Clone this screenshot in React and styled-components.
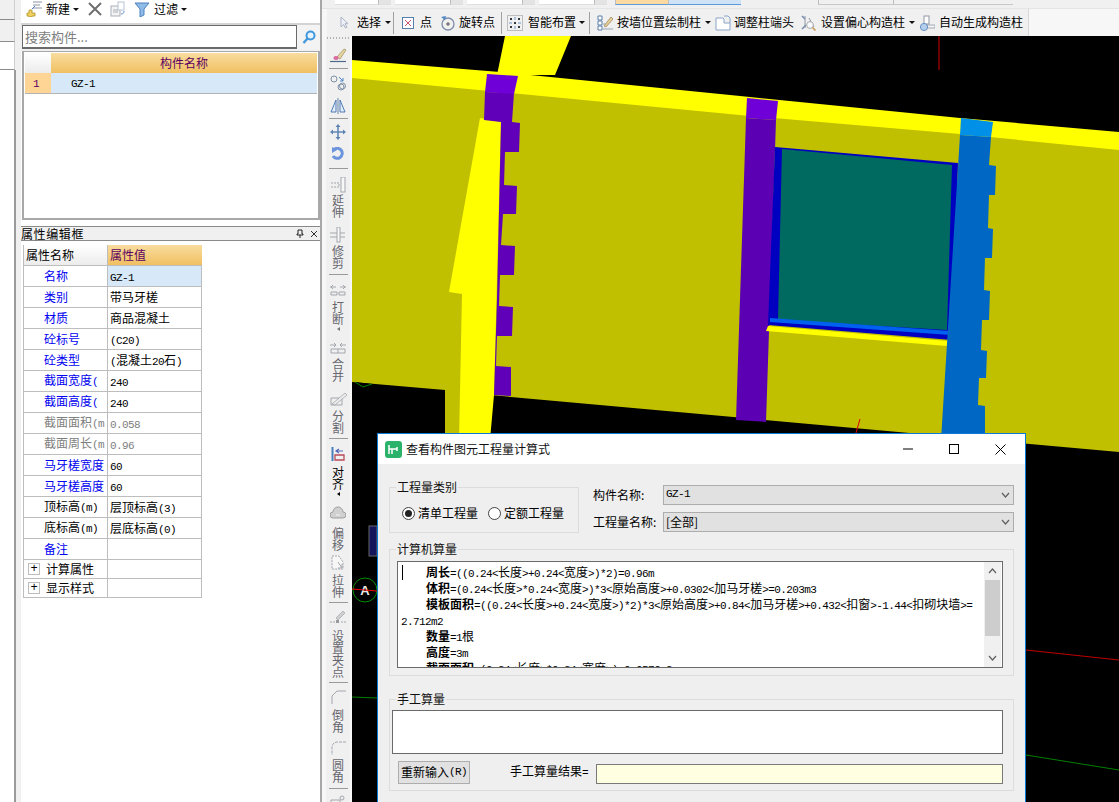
import React from "react";
import styled, { createGlobalStyle } from "styled-components";

const Global = createGlobalStyle`
  html, body { margin: 0; padding: 0; width: 1119px; height: 802px; overflow: hidden; background: #f0f0f0; }
  body { font: 12px/1.2 "Noto Sans CJK SC", "Liberation Sans", sans-serif; color: #000; }
  * { box-sizing: border-box; }
  fieldset { min-width: 0; }
`;

const Page = styled.div`
  position: relative; display: flex; width: 1119px; height: 802px; overflow: hidden; background: #f0f0f0;
`;

/* ---- mixed CJK / half-width text ---- */
const Latin = styled.span`
  font-family: "Liberation Mono", "DejaVu Sans Mono", monospace; font-size: 11px; letter-spacing: -0.6px;
`;
const Mixed = ({ text }) =>
  text.split(/([\x20-\x7e]+)/).filter(Boolean).map((p, i) =>
    /^[\x20-\x7e]/.test(p) ? <Latin key={i}>{p}</Latin> : <React.Fragment key={i}>{p}</React.Fragment>
  );

/* ---- left rail ---- */
const Rail = styled.div`
  width: 21px; flex: none; display: flex; flex-direction: column; background: #f0f0f0;
`;
const RailTab = styled.div`
  width: 15px; height: ${(p) => p.$h}px; flex: none; background: ${(p) => p.$bg};
  border-bottom: 1px solid #8c8c8c; border-right: 1px solid #cfcfcf;
`;
const RailRest = styled.div`
  width: 16px; flex: 1; background: #fff; border-right: 2px solid #9a9a9a;
`;

/* ---- component panel ---- */
const Panel = styled.div`
  width: 301px; flex: none; display: flex; flex-direction: column; background: #fff; border-right: 2px solid #a8a8a8;
`;
const PanelBar = styled.div`
  height: 25px; display: flex; align-items: center; padding: 0 0 5px 5px; background: #fff; border-bottom: 2px solid #d4d4d4; flex: none;
`;
const BarBtn = styled.div`
  display: flex; align-items: center; gap: ${(p) => p.$gap ?? 4}px; margin-left: ${(p) => p.$ml ?? 0}px; white-space: nowrap; height: 18px;
`;
const Caret = styled.span`
  display: block; width: 0; height: 0; flex: none;
  border-left: ${(p) => p.$s ?? 3}px solid transparent; border-right: ${(p) => p.$s ?? 3}px solid transparent;
  border-top: ${(p) => p.$s ?? 3}px solid #111; margin-left: ${(p) => p.$ml ?? 0}px;
`;
const SearchRow = styled.div`
  height: 26px; flex: none; display: flex; background: #f0f0f0; padding: 0 0 2px 1px; align-items: stretch;
`;
const SearchInput = styled.div`
  width: 275px; background: #fff; border: 1px solid #6a6a6a; border-bottom-width: 2px; color: #808080; font-size: 13px; padding: 1px 2px; line-height: 19px;
`;
const SearchBtn = styled.div`
  width: 23px; display: flex; align-items: center; justify-content: center; background: #f3f3f3;
`;
const ListBox = styled.div`
  margin: 0 0 0 1px; width: 298px; height: 169px; flex: none; border: 2px solid #a8a8a8; border-top-width: 1px; background: #fff; padding: 1px;
`;
const ListRow = styled.div`
  display: grid; grid-template-columns: 26px 1fr; height: ${(p) => p.$h}px;
`;
const CornerCell = styled.div`
  background: linear-gradient(#ffffff, #ececec);
`;
const OrangeHead = styled.div`
  background: linear-gradient(#f8dc9e, #f0c062); color: #5c0060; text-align: ${(p) => p.$align ?? "center"};
  line-height: 20px; font-size: 12px; padding-left: ${(p) => p.$pl ?? 0}px;
`;
const NumCell = styled.div`
  background: #ffd596; color: #5c0060; text-align: center; line-height: 18px; padding-right: 4px; border-bottom: 1px solid #b4b4b4;
`;
const NameCell = styled.div`
  background: #d7e8f8; padding-left: 20px; line-height: 18px; border-bottom: 1px solid #b4b4b4;
`;
const PropTitle = styled.div`
  margin-top: 6px; height: 15px; flex: none; display: flex; align-items: center; justify-content: space-between;
  background: #f0f0f0; border-top: 1px solid #8a8a8a; border-bottom: 1px solid #8a8a8a; line-height: 13px; padding-right: 2px;
`;
const TitleText = styled.span`
  letter-spacing: 0.6px;
`;
const TitleIcons = styled.span`
  display: flex; gap: 6px; align-items: center;
`;
const PropGrid = styled.div`
  margin: 4px 0 0 2px; width: 179px; flex: none; border-left: 1px solid #bdbdbd;
`;
const PropRow = styled.div`
  display: grid; grid-template-columns: 84px 94px; height: ${(p) => p.$h ?? 21}px; border-bottom: 1px solid #bdbdbd;
`;
const PropName = styled.div`
  color: ${(p) => p.$color}; padding-left: ${(p) => p.$pl ?? 20}px; border-right: 1px solid #bdbdbd; white-space: nowrap; overflow: hidden;
  display: flex; align-items: center; line-height: 20px; font-size: 12px; background: ${(p) => p.$bg ?? "#fff"};
`;
const PropVal = styled.div`
  color: ${(p) => p.$color ?? "#000"}; background: ${(p) => p.$bg ?? "#fff"}; padding-left: 2px; border-right: 1px solid #bdbdbd; white-space: nowrap; overflow: hidden; line-height: 20px;
`;
const Plus = styled.span`
  width: 12px; height: 12px; border: 1px solid #bdbdbd; margin: 0 6px 0 2px; display: flex; align-items: center; justify-content: center; font: 12px/10px "Liberation Mono", monospace; flex: none; color: #000;
`;

/* ---- centre ---- */
const Center = styled.div`
  flex: 1; min-width: 0; display: flex; flex-direction: column; background: #f7f7f7;
`;
const TopStrip = styled.div`
  height: 9px; flex: none; display: flex; background: #f0f0f0; padding-left: 13px; border-bottom: 1px solid #e4e4e4;
`;
const StripField = styled.div`
  width: ${(p) => p.$w}px; height: 5px; margin-right: ${(p) => p.$mr ?? 4}px; background: ${(p) => p.$bg ?? "#fff"};
  border-bottom: 1px solid ${(p) => p.$line ?? "#e0e0e0"}; border-left: ${(p) => (p.$edge ? "1px solid #bdbdbd" : "0")};
`;
const Toolbar = styled.div`
  height: 27px; width: 702px; margin-left: 5px; flex: none; display: flex; align-items: center; background: #f0f0f0; border-right: 1px solid #d8d8d8; padding-left: 13px; white-space: nowrap;
`;
const ToolSep = styled.span`
  width: 1px; height: 22px; background: #a0a0a0; flex: none; margin-left: ${(p) => p.$ml ?? 0}px;
`;
const Workspace = styled.div`
  flex: 1; min-height: 0; display: flex;
`;
const VBar = styled.div`
  width: 26px; margin-left: 4px; flex: none; display: flex; flex-direction: column; align-items: center; background: #f0f0f0; overflow: hidden; border-right: 2px solid #f8f8f8;
`;
const Grip = styled.div`
  width: 22px; height: 2px; flex: none; margin-top: 1px; background: repeating-linear-gradient(90deg, #b0b0b0 0 1px, transparent 1px 3px);
`;
const VIcon = styled.div`
  margin-top: ${(p) => p.$mt ?? 0}px; display: flex; flex: none; height: ${(p) => p.$h ?? 16}px;
`;
const VSep = styled.div`
  width: 19px; height: 1px; flex: none; background: #9a9a9a; margin-top: ${(p) => p.$mt ?? 0}px;
`;
const VText = styled.div`
  width: 12px; flex: none; line-height: 12px; font-size: 12px; text-align: center; color: ${(p) => p.$color ?? "#67676f"}; margin-top: ${(p) => p.$mt ?? 2}px;
`;
const VCaret = styled.span`
  width: 0; height: 0; flex: none; margin-top: 2px; border-top: 2px solid transparent; border-bottom: 2px solid transparent; border-right: 3px solid ${(p) => p.$color ?? "#777"};
`;
const Viewport = styled.div`
  flex: 1; min-width: 0; background: #000; overflow: hidden;
`;
const Canvas = styled.svg`
  display: block; width: 767px; height: 766px;
`;

/* ---- dialog ---- */
const Dialog = styled.div`
  position: absolute; left: 377px; top: 433px; width: 649px; height: 385px; background: #efefef; border: 1px solid #0a7ad4; display: flex; flex-direction: column;
`;
const DialogHead = styled.div`
  height: 30px; flex: none; background: #fff; display: flex; align-items: center; padding: 0 2px 0 7px;
`;
const DialogTitle = styled.span`
  margin-left: 4px; font-size: 12px; color: #111; flex: 1;
`;
const WinBtn = styled.span`
  display: flex; width: 46px; justify-content: center; align-items: center;
`;
const DialogBody = styled.div`
  flex: 1; padding: 0 11px; display: flex; flex-direction: column;
`;
const TopRow = styled.div`
  display: flex; margin-top: 23px; height: 46px; flex: none;
`;
const Group = styled.fieldset`
  margin: 0; border: 1px solid #dcdcdc; padding: 0; display: flex;
  width: ${(p) => p.$w ?? "auto"}; height: ${(p) => p.$h}px; flex: none; margin-top: ${(p) => p.$mt ?? 0}px; position: relative;
`;
const Legend = styled.div`
  position: absolute; left: 6px; top: -8px; padding: 0 1px; background: #efefef; line-height: 14px; color: #111;
`;
const RadioRow = styled.div`
  display: flex; align-items: center; margin: 17px 0 0 12px; height: 16px;
`;
const Radio = styled.span`
  width: 13px; height: 13px; flex: none; border-radius: 50%; border: 1px solid #444; background: #fff; display: flex; align-items: center; justify-content: center; margin: 0 3px 0 ${(p) => p.$ml ?? 0}px;
`;
const RadioDot = styled.span`
  width: 7px; height: 7px; border-radius: 50%; background: #222;
`;
const FieldCol = styled.div`
  margin: -2px 0 0 14px; flex: 1; display: flex; flex-direction: column; gap: 7px;
`;
const FieldRow = styled.div`
  display: flex; align-items: center; height: 20px;
`;
const FieldLabel = styled.span`
  width: 70px; flex: none; white-space: nowrap;
`;
const SelectBox = styled.div`
  flex: 1; height: 20px; background: #e1e1e1; border: 1px solid #adadad; display: flex; align-items: center; justify-content: space-between; padding: 0 3px 0 2px;
`;
const CalcText = styled.div`
  position: relative; margin: 11px 10px 0 7px; flex: 1; height: 107px; background: #fff; border: 1px solid #6a6a6a; display: flex; overflow: hidden;
`;
const FormulaCol = styled.div`
  flex: 1; padding: 2px 0 0 3px; overflow: hidden; position: relative;
`;
const FormulaLine = styled.div`
  height: 16px; line-height: 16px; white-space: nowrap; padding-left: ${(p) => p.$indent ?? 25}px;
`;
const Strong = styled.b`
  font-weight: 700;
`;
const TextCaret = styled.span`
  position: absolute; left: 4px; top: 3px; width: 1px; height: 15px; background: #000;
`;
const ScrollBar = styled.div`
  width: 17px; flex: none; background: #f0f0f0; display: flex; flex-direction: column; align-items: center; margin-right: 1px;
`;
const ScrollBtn = styled.div`
  height: 18px; flex: none; display: flex; align-items: center; justify-content: center;
`;
const ScrollThumb = styled.div`
  width: 15px; height: 56px; flex: none; background: #cdcdcd;
`;
const ScrollTrack = styled.div`
  flex: 1;
`;
const ManualCol = styled.div`
  flex: 1; display: flex; flex-direction: column; padding: 10px 10px 0 2px;
`;
const ManualArea = styled.div`
  height: 44px; flex: none; background: #fff; border: 1px solid #6a6a6a;
`;
const ManualRow = styled.div`
  display: flex; align-items: center; margin-top: 7px; padding-left: 6px; height: 23px;
`;
const PushBtn = styled.div`
  width: 72px; height: 23px; flex: none; background: #e1e1e1; border: 1px solid #adadad; display: flex; align-items: center; justify-content: center; white-space: nowrap;
`;
const ResultLabel = styled.span`
  margin-left: 40px; white-space: nowrap; width: 86px; flex: none;
`;
const ResultBox = styled.div`
  flex: 1; height: 20px; background: #ffffe1; border: 1px solid #7a7a7a; margin-top: 2px;
`;

/* ---- icons ---- */
const Ico = ({ w = 16, h = 16, vb, children }) => (
  <svg width={w} height={h} viewBox={vb ?? `0 0 ${w} ${h}`} fill="none" style={{ display: "block", flex: "none" }}>{children}</svg>
);
const NewIcon = () => (
  <Ico>
    <path d="M7 1h9M7 4h7M7 7h9" stroke="#8a93a6" strokeWidth="1.2" />
    <path d="M3 9h3v3h3v3H6v1H3v-1H1v-3h2z" fill="#f0d060" stroke="#b0932a" strokeWidth="0.8" />
    <path d="M6 8l3-3" stroke="#4a7bc0" />
  </Ico>
);
const CrossIcon = () => (
  <Ico w={14} h={14}><path d="M1 1l12 12M13 1L1 13" stroke="#6f6f6f" strokeWidth="2" /></Ico>
);
const CopyIcon = () => (
  <Ico>
    <rect x="1" y="5" width="9" height="10" fill="#f4f4f4" stroke="#a8adb5" />
    <path d="M3 9h5M3 11h5" stroke="#a8adb5" />
    <rect x="8" y="1" width="6" height="8" fill="#fff" stroke="#b5c3d6" />
    <path d="M14 10c0 2-1 3-3 3" stroke="#5f8fca" />
  </Ico>
);
const FilterIcon = () => (
  <Ico><path d="M1 2h14L10 8v6l-4 2V8z" fill="#8fbbe8" stroke="#4d82bd" /></Ico>
);
const SearchIcon = () => (
  <Ico w={14} h={15}>
    <circle cx="8.5" cy="5.5" r="4" stroke="#3f97dd" strokeWidth="2" fill="#e8f4fc" />
    <path d="M5.5 8.5L1.5 13" stroke="#3f97dd" strokeWidth="2.4" />
  </Ico>
);
const CursorIcon = () => (
  <Ico w={9} h={13}><path d="M1 1v10l2.5-2.5L5.5 12l1.5-.7-2-3.6H8z" fill="#eef2f8" stroke="#aab2c4" /></Ico>
);
const PointIcon = () => (
  <Ico w={12} h={12}>
    <rect x=".5" y=".5" width="11" height="11" fill="#fff" stroke="#5a7eaa" />
    <path d="M3 3l6 6M9 3L3 9" stroke="#c8506a" />
  </Ico>
);
const RotateIcon = () => (
  <Ico>
    <circle cx="8" cy="9" r="6" stroke="#7d8ea8" strokeWidth="1.3" />
    <path d="M8 7v4M6 9h4" stroke="#555" />
    <path d="M1 2l5-1-1 4z" fill="#4f86c6" />
  </Ico>
);
const SmartIcon = () => (
  <Ico>
    <rect x=".5" y=".5" width="15" height="15" stroke="#8b8b8b" strokeDasharray="1 1" />
    <path d="M3 3h2v2H3zM11 3h2v2h-2zM3 11h2v2H3zM11 11h2v2h-2zM7 7h2v2H7z" fill="#33383f" />
    <path d="M8 2v3M2 8h3M11 8h3M8 11v3" stroke="#6c95c8" />
  </Ico>
);
const WallDrawIcon = () => (
  <Ico>
    <path d="M1 1h4v4H1zM1 6h4v4H1zM1 11h4v4H1z" stroke="#5a7eaa" fill="#fff" />
    <path d="M6 14h10M6 9h3" stroke="#9aa5b5" />
    <path d="M7 11l7-9 2 2-7 8z" fill="#e8cf96" stroke="#9c8c62" strokeWidth=".8" />
  </Ico>
);
const AdjustEndIcon = () => (
  <Ico>
    <path d="M1 3h7l1 1v4h6v7H1z" fill="#fff" stroke="#8aa4c6" />
    <path d="M9 1h4l2 2v5" stroke="#8aa4c6" />
  </Ico>
);
const OffsetIcon = () => (
  <Ico>
    <path d="M1 1l3 3M1 14l4-4" stroke="#6f87a8" strokeWidth="1.4" />
    <path d="M4 1v12M8 3l5 9" stroke="#8a97aa" />
    <circle cx="9" cy="10" r="3.4" stroke="#a8a8a8" fill="#f7fbff" />
    <path d="M11.5 12.5l3 3" stroke="#c79a55" strokeWidth="1.6" />
  </Ico>
);
const AutoIcon = () => (
  <Ico>
    <rect x="5" y="1" width="5" height="8" fill="#fff" stroke="#9098a4" />
    <path d="M8 10h8v3H8z" fill="#f4f4f4" stroke="#9098a4" strokeWidth=".8" />
    <circle cx="5" cy="12" r="3.6" fill="#b4cfee" stroke="#6a8fc0" />
  </Ico>
);
const G = "#a2a6ac";
const VBrush = () => (
  <Ico w={18} h={16}>
    <path d="M8 10l7-8 2 1-6 9z" fill="#e8d5a0" stroke="#9a8a5c" strokeWidth=".7" />
    <ellipse cx="7" cy="11" rx="2.6" ry="2" fill="#d86aa0" />
    <path d="M1 14.5h16" stroke="#4f6b8c" strokeWidth="1.2" />
  </Ico>
);
const VOffset2 = () => (
  <Ico w={16} h={16}>
    <circle cx="4" cy="4" r="3" stroke="#7f8fa6" />
    <circle cx="11" cy="12" r="3" stroke="#7f8fa6" />
    <circle cx="12.5" cy="11" r="3" stroke="#7f8fa6" />
    <path d="M9 2l4 4M13 3v3h-3" stroke="#4f86c6" />
  </Ico>
);
const VMirror = () => (
  <Ico w={16} h={16}>
    <path d="M8 0v16" stroke="#6a86b0" />
    <path d="M6 2v12H1zM10 2v12h5z" stroke="#4f7bb6" fill="#e4eef8" />
  </Ico>
);
const VMove = () => (
  <Ico w={16} h={16}>
    <path d="M8 1v14M1 8h14" stroke="#6288b6" strokeWidth="1.6" />
    <path d="M8 0l2.5 3h-5zM8 16l2.5-3h-5zM0 8l3-2.5v5zM16 8l-3-2.5v5z" fill="#5c83b4" />
  </Ico>
);
const VRotate = () => (
  <Ico w={14} h={15}>
    <path d="M3 2.5A5 5 0 1 1 2 9" stroke="#6c94dc" strokeWidth="3" />
    <path d="M1 0l5 3-5 3z" fill="#6c94dc" />
  </Ico>
);
const VExtend = () => (
  <Ico w={16} h={16}>
    <path d="M1 6h8v4H1" stroke={G} strokeDasharray="2 1" />
    <rect x="11" y="0" width="4" height="15" stroke={G} fill="#f8f8f8" />
  </Ico>
);
const VTrim = () => (
  <Ico w={16} h={16}>
    <rect x="7" y="0" width="3" height="15" stroke={G} fill="#f8f8f8" />
    <path d="M0 6h7M0 10h7M10 6h5M10 10h5" stroke={G} />
  </Ico>
);
const VBreak = () => (
  <Ico w={16} h={12}>
    <path d="M0 3h6M10 3h6M3 1L1 3l2 2M13 1l2 2-2 2" stroke={G} />
    <path d="M1 8h6v3H1zM9 8h6v3H9z" stroke={G} />
  </Ico>
);
const VMerge = () => (
  <Ico w={16} h={12}>
    <path d="M0 3h5M11 3h5M4 1l2 2-2 2M12 1l-2 2 2 2" stroke={G} />
    <path d="M1 7h14v4H1zM8 7v4" stroke={G} />
  </Ico>
);
const VSplit = () => (
  <Ico w={17} h={14}>
    <path d="M1 6h11v7H1z" stroke={G} />
    <path d="M2 12l13-11 2 2L5 13z" fill="#ececec" stroke={G} strokeWidth=".8" />
  </Ico>
);
const VAlign = () => (
  <Ico w={14} h={14}>
    <path d="M1.5 0v14" stroke="#4a7fbf" strokeWidth="2" />
    <path d="M4 8h9v5H4z" stroke="#b84a58" strokeWidth="1.3" />
    <path d="M12 4H6M8 2L5 4l3 2" stroke="#4f66b8" strokeWidth="1.2" />
  </Ico>
);
const VCloud = () => (
  <Ico w={16} h={13}>
    <path d="M3 12a3 3 0 0 1 0-6 5 5 0 0 1 10 0 3 3 0 0 1 0 6z" fill="#d0d0d0" stroke="#a0a0a0" />
    <path d="M6 9h4" stroke="#f4f4f4" />
  </Ico>
);
const VStretch = () => (
  <Ico w={14} h={16}>
    <path d="M1 1h7l4 6v7H1z" fill="#f7f7f7" stroke={G} strokeDasharray="2 1" />
    <path d="M7 7l4 6M11 9v4H7" stroke={G} />
  </Ico>
);
const VGrip = () => (
  <Ico w={16} h={14}>
    <path d="M6 8l7-7 2 2-7 7z" fill="#cfcfcf" stroke={G} strokeWidth=".7" />
    <path d="M0 12h5M11 12h5" stroke={G} strokeDasharray="2 1" />
    <rect x="6" y="10" width="3" height="3" fill="#9a9a9a" />
  </Ico>
);
const VChamfer = () => (
  <Ico w={15} h={14}><path d="M15 1H6L1 6v8" stroke={G} /></Ico>
);
const VRound = () => (
  <Ico w={15} h={14}><path d="M15 1H7Q1 1 1 7v7" stroke={G} strokeDasharray="3 1" /></Ico>
);
const VLast = () => (
  <Ico w={16} h={14}><path d="M1 5h9v9H1z" stroke={G} /><circle cx="12" cy="3" r="2" stroke={G} /></Ico>
);
const Chevron = ({ up }) => (
  <Ico w={9} h={6}><path d={up ? "M1 5l3.5-4L8 5" : "M1 1l3.5 4L8 1"} stroke="#5f5f5f" strokeWidth="1.2" /></Ico>
);

/* ---- data ---- */
const BLUE = "#0000f0";
const GRAY = "#808080";
const props = [
  { n: "名称", c: BLUE, v: "GZ-1", bg: "#d7e8f8" },
  { n: "类别", c: BLUE, v: "带马牙槎" },
  { n: "材质", c: BLUE, v: "商品混凝土" },
  { n: "砼标号", c: BLUE, v: "(C20)" },
  { n: "砼类型", c: BLUE, v: "(混凝土20石)" },
  { n: "截面宽度(", c: BLUE, v: "240" },
  { n: "截面高度(", c: BLUE, v: "240" },
  { n: "截面面积(m", c: GRAY, v: "0.058", vc: GRAY },
  { n: "截面周长(m", c: GRAY, v: "0.96", vc: GRAY },
  { n: "马牙槎宽度", c: BLUE, v: "60" },
  { n: "马牙槎高度", c: BLUE, v: "60" },
  { n: "顶标高(m)", c: "#000", v: "层顶标高(3)" },
  { n: "底标高(m)", c: "#000", v: "层底标高(0)" },
  { n: "备注", c: BLUE, v: "" },
];

const Tool = ({ ml, gap = 4, icon, text, caret, caretMl = 3 }) => (
  <BarBtn $ml={ml} $gap={gap}>
    {icon}
    <span>{text}</span>
    {caret && <Caret $ml={caretMl - gap} />}
  </BarBtn>
);

const Scene = () => (
  <Canvas viewBox="352 36 767 766">
    <rect x="352" y="36" width="767" height="766" fill="#000" />
    <path d="M939 36V70" stroke="#d00000" />
    <polygon points="352,75 1119,148 1119,452 490,395 490,440 445,440 445,390 352,382" fill="#c1c000" />
    <polygon points="505,36 571,36 555,75 497,75" fill="#ffff00" />
    <polygon points="352,60 500,72 750,97 960,118 1119,132 1119,150 960,134 750,116 500,92 352,78" fill="#ffff00" />
    <polygon points="480,118 449,292 462,294 459,440 490,440 494,395 501,122" fill="#ffff00" />
    <polygon points="485,92 514,93 512,122 520,123 519,152 505,152 504,185 517,186 516,214 503,214 501,245 515,246 514,275 500,275 499,306 513,307 512,336 497,336 496,366 511,367 511,396 494,395 497,300 501,122 484,120" fill="#6000b8" />
    <polygon points="487,74 518,76 514,94 485,92" fill="#7000d8" />
    <polygon points="746,118 776,120 766,422 736,420" fill="#5c00b4" />
    <polygon points="747,98 778,101 776,120 746,118" fill="#7000d8" />
    <polygon points="775,147 958,163 952,340 768,325" fill="#0000c0" />
    <polygon points="782,149 952,165 947,330 778,320" fill="#006a60" />
    <polygon points="770,318 950,331 950,335 770,322" fill="#0060f0" />
    <polygon points="768,326 948,341 947,346 766,331" fill="#ffff00" />
    <polygon points="960,135 991,137 989,165 996,166 995,195 989,195 988,228 993,229 992,258 985,258 984,290 990,291 989,320 982,320 981,350 987,351 986,378 979,378 978,405 985,406 985,440 941,440" fill="#0068c4" />
    <polygon points="961,118 993,122 991,137 960,135" fill="#0090e8" />
    <path d="M856 433l4-14" stroke="#e00000" />
    <path d="M1026 650L1119 660" stroke="#c00000" />
    <path d="M1026 755L1119 770" stroke="#008000" />
    <path d="M352 697L377 698" stroke="#008000" />
    <path d="M355 382l8 5 9-3" stroke="#008000" />
    <rect x="369" y="526" width="8" height="30" fill="#14145c" stroke="#666" />
    <circle cx="365" cy="590" r="12" stroke="#009000" fill="none" />
    <text x="365" y="595" textAnchor="middle" fill="#e8e8e8" fontFamily="Liberation Sans" fontWeight="700" fontSize="13">A</text>
    <path d="M352 589L377 591" stroke="#f00000" />
  </Canvas>
);

export default function App() {
  return (
    <Page>
      <Global />
      <Rail>
        <RailTab $h={20} $bg="#f0f0f0" />
        <RailTab $h={22} $bg="#f0f0f0" />
        <RailTab $h={28} $bg="#fff" />
        <RailRest />
      </Rail>

      <Panel>
        <PanelBar>
          <Tool icon={<NewIcon />} text="新建" caret caretMl={3} />
          <BarBtn $ml={9}><CrossIcon /></BarBtn>
          <BarBtn $ml={8}><CopyIcon /></BarBtn>
          <BarBtn $ml={8}><FilterIcon /></BarBtn>
          <Tool ml={4} gap={0} icon={null} text="过滤" caret caretMl={3} />
        </PanelBar>
        <SearchRow>
          <SearchInput>搜索构件...</SearchInput>
          <SearchBtn><SearchIcon /></SearchBtn>
        </SearchRow>
        <ListBox>
          <ListRow $h={20}>
            <CornerCell />
            <OrangeHead>构件名称</OrangeHead>
          </ListRow>
          <ListRow $h={19}>
            <NumCell><Mixed text="1" /></NumCell>
            <NameCell><Mixed text="GZ-1" /></NameCell>
          </ListRow>
        </ListBox>
        <PropTitle>
          <TitleText>属性编辑框</TitleText>
          <TitleIcons>
            <Ico w={8} h={9}><path d="M2 1h4v4h1v1H1V5h1zM4 6v3" stroke="#222" /></Ico>
            <Ico w={8} h={8}><path d="M1 1l6 6M7 1L1 7" stroke="#333" /></Ico>
          </TitleIcons>
        </PropTitle>
        <PropGrid>
          <PropRow>
            <PropName $pl={2} $color="#000" $bg="linear-gradient(#fff,#ececec)">属性名称</PropName>
            <OrangeHead $align="left" $pl={2}>属性值</OrangeHead>
          </PropRow>
          {props.map((r) => (
            <PropRow key={r.n}>
              <PropName $color={r.c}><span><Mixed text={r.n} /></span></PropName>
              <PropVal $color={r.vc} $bg={r.bg}><Mixed text={r.v} /></PropVal>
            </PropRow>
          ))}
          {["计算属性", "显示样式"].map((n) => (
            <PropRow key={n} $h={19}>
              <PropName $pl={2} $color="#000"><Plus>+</Plus>{n}</PropName>
              <PropVal />
            </PropRow>
          ))}
        </PropGrid>
      </Panel>

      <Center>
        <TopStrip>
          <StripField $w={43} $mr={0} />
          <StripField $w={13} $bg="#e4e4e4" $edge />
          <StripField $w={55} $mr={0} />
          <StripField $w={13} $bg="#e4e4e4" $edge />
          <StripField $w={55} $mr={0} />
          <StripField $w={13} $bg="#e4e4e4" $edge />
          <StripField $w={55} $mr={0} />
          <StripField $w={13} $bg="#e4e4e4" $edge $mr={8} />
          <StripField $w={53} $mr={0} $bg="#fbd9a0" $line="#5c9ad8" $edge />
          <StripField $w={73} $mr={77} $bg="#cfe2f6" $line="#5c9ad8" $edge />
          <StripField $w={75} $mr={0} $bg="#f0f0f0" $line="#c8c8c8" $edge />
          <StripField $w={120} $mr={0} $bg="#f0f0f0" $line="#c8c8c8" $edge />
        </TopStrip>
        <Toolbar>
          <Tool gap={8} icon={<CursorIcon />} text="选择" caret caretMl={4} />
          <ToolSep $ml={2} />
          <Tool ml={8} gap={6} icon={<PointIcon />} text="点" />
          <Tool ml={8} gap={3} icon={<RotateIcon />} text="旋转点" />
          <ToolSep $ml={6} />
          <Tool ml={5} gap={5} icon={<SmartIcon />} text="智能布置" caret caretMl={3} />
          <ToolSep $ml={4} />
          <Tool ml={7} gap={4} icon={<WallDrawIcon />} text="按墙位置绘制柱" caret caretMl={4} />
          <Tool ml={4} gap={3} icon={<AdjustEndIcon />} text="调整柱端头" />
          <Tool ml={7} gap={4} icon={<OffsetIcon />} text="设置偏心构造柱" caret caretMl={4} />
          <Tool ml={4} gap={4} icon={<AutoIcon />} text="自动生成构造柱" />
        </Toolbar>
        <Workspace>
          <VBar>
            <Grip />
            <VIcon $mt={8}><VBrush /></VIcon>
            <VSep $mt={5} />
            <VIcon $mt={6}><VOffset2 /></VIcon>
            <VIcon $mt={7}><VMirror /></VIcon>
            <VSep $mt={4} />
            <VIcon $mt={5}><VMove /></VIcon>
            <VIcon $mt={7} $h={15}><VRotate /></VIcon>
            <VSep $mt={6} />
            <VIcon $mt={8}><VExtend /></VIcon>
            <VText $mt={1}>延伸</VText>
            <VIcon $mt={9}><VTrim /></VIcon>
            <VText $mt={2}>修剪</VText>
            <VSep $mt={5} />
            <VIcon $mt={9} $h={12}><VBreak /></VIcon>
            <VText $mt={5}>打断</VText>
            <VCaret />
            <VIcon $mt={11} $h={12}><VMerge /></VIcon>
            <VText $mt={4}>合并</VText>
            <VIcon $mt={10} $h={14}><VSplit /></VIcon>
            <VText $mt={4}>分割</VText>
            <VSep $mt={4} />
            <VIcon $mt={8} $h={14}><VAlign /></VIcon>
            <VText $mt={5} $color="#000">对齐</VText>
            <VCaret $color="#000" />
            <VIcon $mt={10} $h={13}><VCloud /></VIcon>
            <VText $mt={8}>偏移</VText>
            <VIcon $mt={4}><VStretch /></VIcon>
            <VText $mt={3}>拉伸</VText>
            <VSep $mt={4} />
            <VIcon $mt={7} $h={14}><VGrip /></VIcon>
            <VText $mt={6}>设置夹点</VText>
            <VSep $mt={4} />
            <VIcon $mt={7} $h={14}><VChamfer /></VIcon>
            <VText $mt={5}>倒角</VText>
            <VIcon $mt={8} $h={14}><VRound /></VIcon>
            <VText $mt={4}>圆角</VText>
            <VSep $mt={5} />
            <VIcon $mt={6} $h={14}><VLast /></VIcon>
          </VBar>
          <Viewport><Scene /></Viewport>
        </Workspace>
      </Center>

      <Dialog>
        <DialogHead>
          <Ico w={17} h={17}>
            <rect width="17" height="17" rx="3" fill="#2cb36b" />
            <path d="M4 4v9M4 8h8M12 6v4M7 8v5" stroke="#fff" strokeWidth="1.5" />
          </Ico>
          <DialogTitle>查看构件图元工程量计算式</DialogTitle>
          <WinBtn><Ico w={10} h={10}><path d="M0 5h10" stroke="#000" /></Ico></WinBtn>
          <WinBtn><Ico w={10} h={10}><rect x=".5" y=".5" width="9" height="9" stroke="#000" /></Ico></WinBtn>
          <WinBtn><Ico w={11} h={11}><path d="M.5.5l10 10M10.5.5l-10 10" stroke="#000" /></Ico></WinBtn>
        </DialogHead>
        <DialogBody>
          <TopRow>
            <Group $w="190px" $h={46}>
              <Legend>工程量类别</Legend>
              <RadioRow>
                <Radio><RadioDot /></Radio>清单工程量
                <Radio $ml={10} />定额工程量
              </RadioRow>
            </Group>
            <FieldCol>
              <FieldRow>
                <FieldLabel>构件名称:</FieldLabel>
                <SelectBox><Mixed text="GZ-1" /><Chevron /></SelectBox>
              </FieldRow>
              <FieldRow>
                <FieldLabel>工程量名称:</FieldLabel>
                <SelectBox><span>[全部]</span><Chevron /></SelectBox>
              </FieldRow>
            </FieldCol>
          </TopRow>
          <Group $h={127} $mt={16}>
            <Legend>计算机算量</Legend>
            <CalcText>
              <FormulaCol>
                <TextCaret />
                <FormulaLine><Strong>周长</Strong><Mixed text="=((0.24<长度>+0.24<宽度>)*2)=0.96m" /></FormulaLine>
                <FormulaLine><Strong>体积</Strong><Mixed text="=(0.24<长度>*0.24<宽度>)*3<原始高度>+0.0302<加马牙槎>=0.203m3" /></FormulaLine>
                <FormulaLine><Strong>模板面积</Strong><Mixed text="=((0.24<长度>+0.24<宽度>)*2)*3<原始高度>+0.84<加马牙槎>+0.432<扣窗>-1.44<扣砌块墙>=" /></FormulaLine>
                <FormulaLine $indent={0}><Mixed text="2.712m2" /></FormulaLine>
                <FormulaLine><Strong>数量</Strong><Mixed text="=1根" /></FormulaLine>
                <FormulaLine><Strong>高度</Strong><Mixed text="=3m" /></FormulaLine>
                <FormulaLine><Strong>截面面积</Strong><Mixed text="=(0.24<长度>*0.24<宽度>)=0.0576m2" /></FormulaLine>
              </FormulaCol>
              <ScrollBar>
                <ScrollBtn><Chevron up /></ScrollBtn>
                <ScrollThumb />
                <ScrollTrack />
                <ScrollBtn><Chevron /></ScrollBtn>
              </ScrollBar>
            </CalcText>
          </Group>
          <Group $h={92} $mt={23}>
            <Legend>手工算量</Legend>
            <ManualCol>
              <ManualArea />
              <ManualRow>
                <PushBtn>重新输入<Mixed text="(R)" /></PushBtn>
                <ResultLabel>手工算量结果<Mixed text="=" /></ResultLabel>
                <ResultBox />
              </ManualRow>
            </ManualCol>
          </Group>
        </DialogBody>
      </Dialog>
    </Page>
  );
}
